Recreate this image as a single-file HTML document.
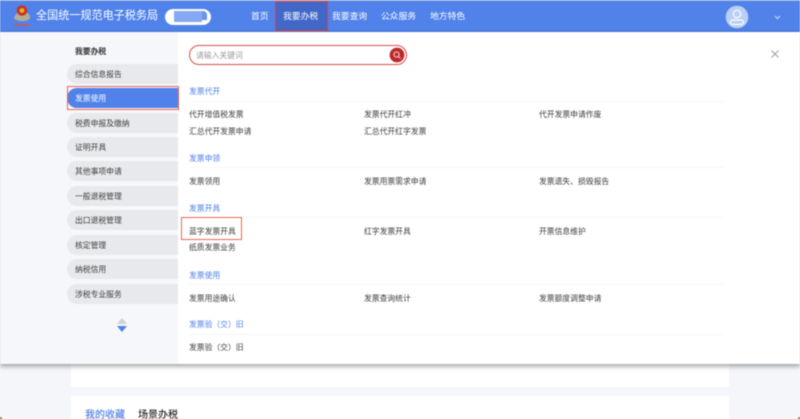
<!DOCTYPE html>
<html lang="zh"><head><meta charset="utf-8"><style>
*{box-sizing:border-box;margin:0;padding:0}
html,body{width:800px;height:419px;overflow:hidden;background:#f5f6f9}
body{position:relative;font-family:"Liberation Sans","Noto Sans CJK SC",sans-serif}
#w{position:absolute;left:0;top:0;width:800px;height:419px;filter:blur(.5px)}
.a{position:absolute;white-space:nowrap}
.t{font-size:7.8px;line-height:12px;color:#3c3c3c}
.s{font-size:7.8px;line-height:12px;color:#4a7ee8}
.l{position:absolute;left:189px;width:535px;height:1px;background:#f5f6f8}
.p{position:absolute;left:67px;width:111px;height:20px;background:#e8e9ec;border-radius:10px 0 0 10px;font-size:7.8px;line-height:20px;padding:1px 0 0 8px;color:#3c3c3c}
.n{position:absolute;top:10px;font-size:8.8px;line-height:12px;color:#fff}
.r{position:absolute;border:1.5px solid #f0644e}
</style></head><body><div id="w">
<div class="a" style="left:71px;top:340px;width:658px;height:47px;background:#fff;border-radius:2px"></div>
<div class="a" style="left:71px;top:396px;width:658px;height:30px;background:#fff;border-radius:2px"></div>
<div class="a" style="left:85px;top:409px;font-size:10px;line-height:14px;font-weight:500;color:#4a7ee8">我的收藏</div>
<div class="a" style="left:138px;top:409px;font-size:10px;line-height:14px;font-weight:500;color:#2c2c2c">场景办税</div>
<div class="a" style="left:0;top:417px;width:2px;height:2px;background:#6b6a2c;border-radius:0 2px 0 0"></div>
<div class="a" style="left:798px;top:417px;width:2px;height:2px;background:#6b6a2c;border-radius:2px 0 0 0"></div>

<div class="a" style="left:0;top:0;width:800px;height:32px;background:#5082ea;border-top:1px solid #98aedb"></div>
<svg class="a" style="left:12px;top:2px" width="20" height="27" viewBox="0 0 20 27"><path d="M2 16C3 13 5 11 6 10L14 10C16 11 18 13 18 16C16 20 4 20 2 16Z" fill="#b3ad96"/><circle cx="10" cy="8.500" r="5.300" fill="#c8341f"/><circle cx="10" cy="8.500" r="2.400" fill="#e3b13c"/><path d="M2.500 23H18" stroke="#d9534a" stroke-width="2" stroke-dasharray="3 1"/></svg>
<div class="a" style="left:36px;top:9px;font-size:11.1px;line-height:15px;color:#fff">全国统一规范电子税务局</div>
<div class="a" style="left:165px;top:9px;width:46px;height:16px;background:#fff;border-radius:8px"></div>
<div class="a" style="left:174px;top:11px;width:28px;height:11px;background:#86a8f2"></div>
<div class="a" style="left:202px;top:11px;width:5px;height:9px;background:#6a95ee;border-radius:0 4px 0 0"></div>
<div class="a" style="left:275px;top:1px;width:53px;height:30px;background:#4167c8;border:1.5px solid #e33e36"></div>
<div class="n" style="left:251px">首页</div>
<div class="n" style="left:283px">我要办税</div>
<div class="n" style="left:332px">我要查询</div>
<div class="n" style="left:381px">公众服务</div>
<div class="n" style="left:430px">地方特色</div>
<svg class="a" style="left:725px;top:5px" width="24" height="24" viewBox="0 0 24 24"><circle cx="12" cy="12" r="11.3" fill="#b9cff5"/><circle cx="12" cy="9" r="3.7" fill="none" stroke="#fff" stroke-width="1.2"/><rect x="5.500" y="15" width="13" height="4.500" rx="2.200" fill="none" stroke="#fff" stroke-width="1.2"/></svg>
<svg class="a" style="left:774px;top:15px" width="7" height="5" viewBox="0 0 7 5"><path d="M1 1L3.500 3.500L6 1" fill="none" stroke="#d5e1f8" stroke-width="1"/></svg>

<div class="a" style="left:0;top:32px;width:800px;height:332px;background:#fff;box-shadow:0 2px 5px rgba(0,0,0,.4)"></div>
<div class="a" style="left:0;top:32px;width:178px;height:332px;background:#f6f7fb"></div>
<div class="a" style="left:75px;top:46px;font-size:7.8px;line-height:12px;font-weight:bold;color:#333">我要办税</div>
<div class="p" style="top:64px">综合信息报告</div>
<div class="p" style="top:88px;background:#5082ea;color:#fff">发票使用</div>
<div class="p" style="top:113px">税费申报及缴纳</div>
<div class="p" style="top:137px">证明开具</div>
<div class="p" style="top:161px">其他事项申请</div>
<div class="p" style="top:186px">一般退税管理</div>
<div class="p" style="top:210px">出口退税管理</div>
<div class="p" style="top:235px">核定管理</div>
<div class="p" style="top:259px">纳税信用</div>
<div class="p" style="top:284px">涉税专业服务</div>
<div class="r" style="left:67px;top:86px;width:112px;height:24px"></div>
<svg class="a" style="left:116px;top:317px" width="12" height="16" viewBox="0 0 12 16"><path d="M6 1L11 7L1 7Z" fill="#cfd1d6"/><path d="M1 9L11 9L6 15Z" fill="#5082ea"/></svg>

<div class="a" style="left:189px;top:45px;width:218px;height:20px;border:1.5px solid #d5504c;border-radius:10px;background:#fff"></div>
<div class="a" style="left:196px;top:50px;font-size:7.8px;line-height:12px;color:#999">请输入关键词</div>
<svg class="a" style="left:387px;top:45px" width="20" height="20" viewBox="0 0 20 20"><circle cx="10" cy="10" r="7.4" fill="#bd2a2c"/><circle cx="9.500" cy="9.500" r="2.600" fill="none" stroke="#f3d0d0" stroke-width="1"/><path d="M11.500 11.500L13.500 13.500" stroke="#f3d0d0" stroke-width="1"/></svg>
<svg class="a" style="left:770px;top:49px" width="10" height="10" viewBox="0 0 10 10"><path d="M1.500 1.500L8.500 8.500M8.500 1.500L1.500 8.500" stroke="#a0a0a0" stroke-width="1.1"/></svg>

<div class="a s" style="left:189px;top:86px">发票代开</div><div class="l" style="top:101px"></div>
<div class="a t" style="left:189px;top:109px">代开增值税发票</div>
<div class="a t" style="left:364px;top:109px">发票代开红冲</div>
<div class="a t" style="left:539px;top:109px">代开发票申请作废</div>
<div class="a t" style="left:189px;top:126px">汇总代开发票申请</div>
<div class="a t" style="left:364px;top:126px">汇总代开红字发票</div>

<div class="a s" style="left:189px;top:153px">发票申领</div><div class="l" style="top:167px"></div>
<div class="a t" style="left:189px;top:176px">发票领用</div>
<div class="a t" style="left:364px;top:176px">发票用票需求申请</div>
<div class="a t" style="left:539px;top:176px">发票遗失、损毁报告</div>

<div class="a s" style="left:189px;top:203px">发票开具</div><div class="l" style="top:217px"></div>
<div class="a t" style="left:189px;top:226px">蓝字发票开具</div>
<div class="a t" style="left:364px;top:226px">红字发票开具</div>
<div class="a t" style="left:539px;top:226px">开票信息维护</div>
<div class="a t" style="left:189px;top:242px">纸质发票业务</div>
<div class="r" style="left:181px;top:217px;width:61px;height:23px"></div>

<div class="a s" style="left:189px;top:270px">发票使用</div><div class="l" style="top:284px"></div>
<div class="a t" style="left:189px;top:293px">发票用途确认</div>
<div class="a t" style="left:364px;top:293px">发票查询统计</div>
<div class="a t" style="left:539px;top:293px">发票额度调整申请</div>

<div class="a s" style="left:189px;top:319px">发票验（交）旧</div><div class="l" style="top:334px"></div>
<div class="a t" style="left:189px;top:342px">发票验（交）旧</div>
</div></body></html>
